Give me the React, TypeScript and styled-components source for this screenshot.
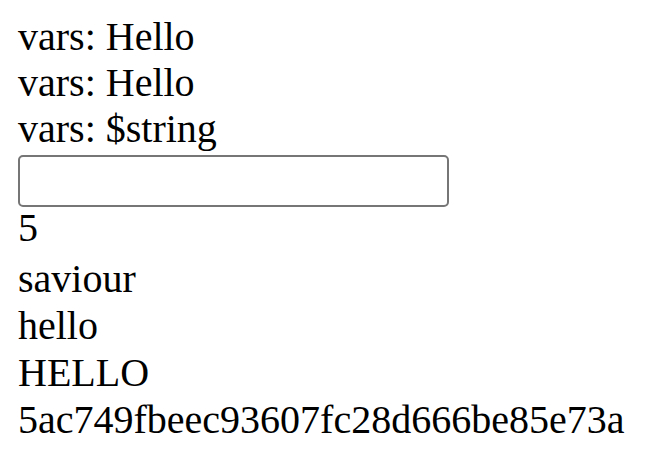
import React from "react";
import styled, { createGlobalStyle } from "styled-components";

const Global = createGlobalStyle`
  html, body { margin: 0; padding: 0; background: #ffffff; }
`;

const Page = styled.div`
  display: flex;
  flex-direction: column;
  align-items: flex-start;
  padding: 14px 0 0 18px;
  font-family: "Liberation Serif", "Times New Roman", serif;
  color: #000000;
`;

const Line = styled.div`
  font-size: 40px;
  line-height: 46px;
  white-space: nowrap;
`;

const Output = styled.div`
  display: flex;
  flex-direction: column;
  margin-top: 4px;
`;

const OutLine = styled.div`
  font-size: 40px;
  line-height: 47px;
  white-space: nowrap;
`;

const TextInput = styled.input`
  display: block;
  box-sizing: border-box;
  width: 431px;
  height: 52px;
  margin: 3px 0 -2px 0;
  padding: 2px 4px;
  border: 2px solid #767676;
  border-radius: 5px;
  background: #ffffff;
  font-family: "Liberation Serif", serif;
  font-size: 32px;
  outline: none;
`;

export default function App() {
  return (
    <>
      <Global />
      <Page>
        <Line>vars: Hello</Line>
        <Line>vars: Hello</Line>
        <Line>vars: $string</Line>
        <TextInput type="text" />
        <Line>5</Line>
        <Output>
          <OutLine>saviour</OutLine>
          <OutLine>hello</OutLine>
          <OutLine>HELLO</OutLine>
          <OutLine>5ac749fbeec93607fc28d666be85e73a</OutLine>
        </Output>
      </Page>
    </>
  );
}
